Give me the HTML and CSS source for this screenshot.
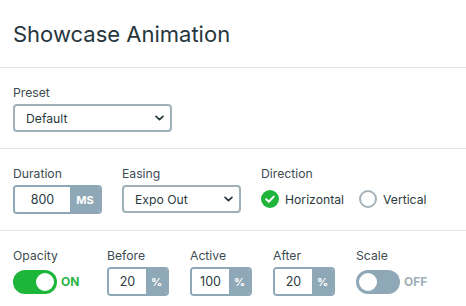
FILE: index.html
```html
<!DOCTYPE html>
<html>
<head>
<meta charset="utf-8">
<link rel="stylesheet" href="styles.css">
</head>
<body>
<div class="panel">
  <header class="head"><h1>Showcase Animation</h1></header>
  <section class="sec">
    <div class="field">
      <label>Preset</label>
      <div class="select preset"><span>Default</span><svg class="chev" viewBox="0 0 10 6" width="9" height="6"><path d="M1.2 1.2 L5 4.8 L8.8 1.2" fill="none" stroke="#2d3b42" stroke-width="2" stroke-linecap="round" stroke-linejoin="round"/></svg></div>
    </div>
  </section>
  <section class="sec row2">
    <div class="field">
      <label>Duration</label>
      <div class="unit dur"><span class="num">800</span><span class="suf">MS</span></div>
    </div>
    <div class="field">
      <label>Easing</label>
      <div class="select easing"><span>Expo Out</span><svg class="chev" viewBox="0 0 10 6" width="9" height="6"><path d="M1.2 1.2 L5 4.8 L8.8 1.2" fill="none" stroke="#2d3b42" stroke-width="2" stroke-linecap="round" stroke-linejoin="round"/></svg></div>
    </div>
    <div class="field dir">
      <label>Direction</label>
      <div class="radios">
        <span class="radio"><svg width="18" height="18" viewBox="0 0 18 18"><circle cx="9" cy="9" r="9" fill="#1eb53a"/><path d="M5.2 9.3 L7.8 11.8 L12.8 6.6" fill="none" stroke="#fff" stroke-width="2" stroke-linecap="round" stroke-linejoin="round"/></svg>Horizontal</span>
        <span class="radio"><svg width="18" height="18" viewBox="0 0 18 18"><circle cx="9" cy="9" r="8" fill="#fff" stroke="#a4b3bb" stroke-width="2"/></svg>Vertical</span>
      </div>
    </div>
  </section>
  <section class="sec row3">
    <div class="field">
      <label>Opacity</label>
      <div class="tog on"><span class="track"><span class="knob"></span></span><span class="tlabel">ON</span></div>
    </div>
    <div class="field">
      <label>Before</label>
      <div class="unit pct"><span class="num">20</span><span class="suf">%</span></div>
    </div>
    <div class="field">
      <label>Active</label>
      <div class="unit pct"><span class="num">100</span><span class="suf">%</span></div>
    </div>
    <div class="field">
      <label>After</label>
      <div class="unit pct"><span class="num">20</span><span class="suf">%</span></div>
    </div>
    <div class="field">
      <label>Scale</label>
      <div class="tog off"><span class="track"><span class="knob"></span></span><span class="tlabel">OFF</span></div>
    </div>
  </section>
</div>
</body>
</html>
```
FILE: styles.css
```css
* { box-sizing: border-box; }
html, body { margin: 0; padding: 0; background: #fff; }
body { font-family: Inter, "Noto Sans", sans-serif; color: #2c3a40; width: 466px; }
.head { height: 68px; display: flex; align-items: center; padding: 0 13px; border-bottom: 1px solid #e3e6e8; }
.head h1 { margin: 0; font-size: 22px; font-weight: 400; color: #26363d; letter-spacing: 0; }
.sec { padding: 16px 13px 16px; border-bottom: 1px solid #e3e6e8; display: flex; }
.field { display: flex; flex-direction: column; }
.field label { font-size: 12.2px; line-height: 17px; color: #3d4b52; margin-bottom: 3px; }
.select { height: 28px; border: 2px solid #9fb0b9; border-radius: 4px; display: flex; align-items: center; justify-content: space-between; padding: 0 6px 0 11px; font-size: 12.2px; color: #2c3a40; }
.preset { width: 159px; }
.easing { width: 119px; }
.row2 .field + .field { margin-left: 20px; }
.row2 .dir { margin-left: 21px; }
.unit { height: 29px; border: 2px solid #8fa8b7; border-radius: 4px; display: flex; overflow: hidden; font-size: 12.5px; }
.unit .num { flex: 1; background: #fff; display: flex; align-items: center; justify-content: center; color: #2c3a40; }
.unit .suf { background: #8fa8b7; color: #fff; font-weight: 700; font-size: 11px; display: flex; align-items: center; justify-content: center; }
.dur { width: 89px; }
.dur .suf { width: 30px; }
.pct { width: 62px; }
.pct .suf { width: 21px; }
.radios { display: flex; align-items: center; height: 28px; gap: 15px; }
.radio { display: flex; align-items: center; gap: 6px; font-size: 12.2px; color: #2c3a40; }
.row3 .field { margin-right: 21px; }
.row3 .field:first-child { width: 73px; }
.tog { display: flex; align-items: center; height: 29px; gap: 4px; }
.track { width: 44px; height: 24px; border-radius: 12px; position: relative; display: block; }
.knob { position: absolute; top: 3px; width: 18px; height: 18px; border-radius: 50%; background: #fff; }
.on .track { background: #1db53a; }
.on .knob { right: 3px; }
.on .tlabel { color: #2fb446; font-weight: 700; font-size: 12px; }
.off .track { background: #8fa8b7; }
.off .knob { left: 3px; }
.off .tlabel { color: #9fb0b9; font-weight: 700; font-size: 12px; }
```
